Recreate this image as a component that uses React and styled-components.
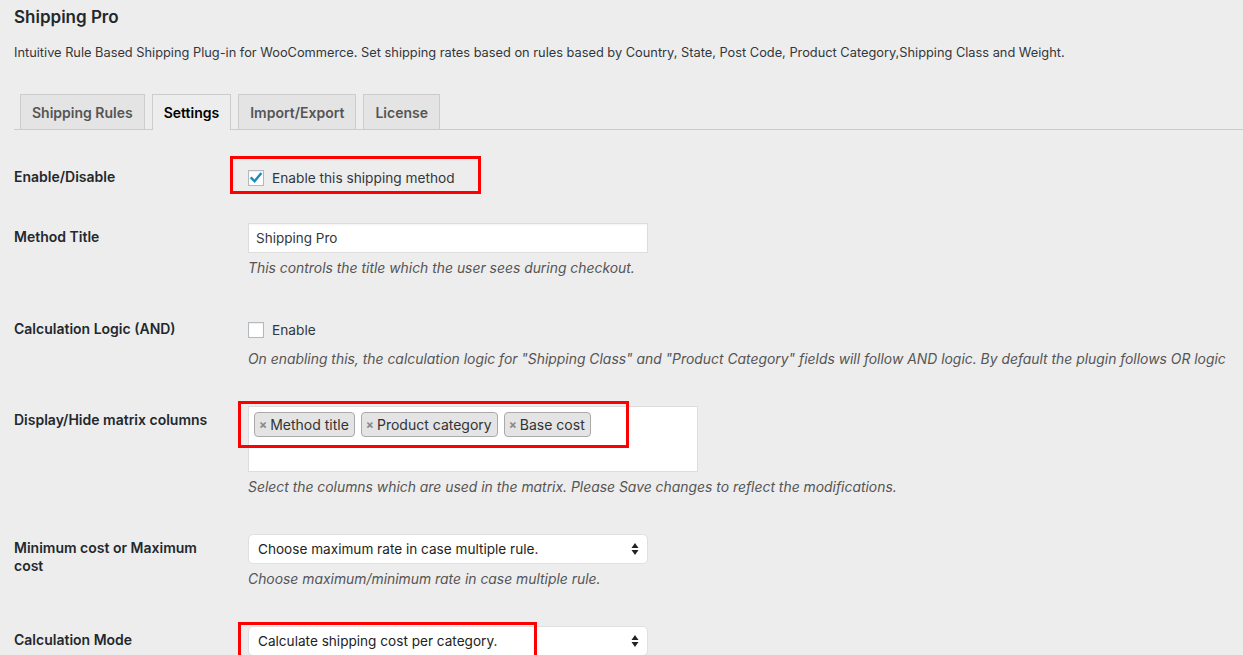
import React from "react";
import styled, { createGlobalStyle } from "styled-components";

const GlobalStyle = createGlobalStyle`
  html, body {
    margin: 0;
    padding: 0;
    background: #ededed;
  }
  body {
    font-family: Inter, "Noto Sans", "Liberation Sans", sans-serif;
    color: #23282d;
    overflow: hidden;
  }
`;

const Page = styled.div`
  padding: 0 0 0 14px;
  width: 1229px;
  height: 655px;
  overflow: hidden;
`;

const Title = styled.h2`
  margin: 0;
  padding-top: 7px;
  font-size: 17px;
  line-height: 20px;
  font-weight: 600;
  color: #23282d;
`;

const Intro = styled.p`
  margin: 16px 0 0;
  font-size: 12.8px;
  line-height: 20px;
  color: #32373c;
  white-space: nowrap;
`;

const TabBar = styled.nav`
  display: flex;
  align-items: flex-end;
  margin-top: 31px;
  padding-left: 6px;
  border-bottom: 1px solid #ccc;
  height: 35px;
`;

const Tab = styled.a`
  box-sizing: border-box;
  height: ${(p) => (p.active ? "36px" : "35px")};
  margin-right: 7px;
  margin-bottom: ${(p) => (p.active ? "-1px" : "0")};
  padding: 0 11px;
  display: flex;
  align-items: center;
  border: 1px solid #ccc;
  border-bottom: none;
  background: ${(p) => (p.active ? "#ededed" : "#e4e4e4")};
  color: ${(p) => (p.active ? "#000" : "#555")};
  font-size: 14px;
  font-weight: 600;
  text-decoration: none;
  white-space: nowrap;
`;

const Form = styled.div`
  margin-top: 18px;
`;

const Row = styled.div`
  display: grid;
  grid-template-columns: 220px 1fr;
  align-items: start;
`;

const Label = styled.div`
  padding: 20px 10px 20px 0;
  font-size: 14px;
  line-height: 18px;
  font-weight: 600;
  color: #23282d;
`;

const Field = styled.div`
  padding: 15px 10px 15px 14px;
`;

const Control = styled.div`
  position: relative;
  width: max-content;
`;

const CheckLine = styled.label`
  display: flex;
  align-items: center;
  gap: 8px;
  height: ${(p) => p.h || 30}px;
  font-size: 13.7px;
  color: #32373c;
`;

const Box = styled.span`
  box-sizing: border-box;
  width: 16px;
  height: 16px;
  border: 1px solid #b4b9be;
  background: #fff;
  box-shadow: inset 0 1px 2px rgba(0, 0, 0, 0.07);
  display: flex;
  align-items: center;
  justify-content: center;
`;

const TextInput = styled.div`
  box-sizing: border-box;
  width: 400px;
  height: 30px;
  padding: 0 7px;
  display: flex;
  align-items: center;
  background: #fff;
  border: 1px solid #ddd;
  box-shadow: inset 0 1px 2px rgba(0, 0, 0, 0.05);
  font-size: 13.5px;
  color: #32373c;
`;

const Description = styled.p`
  margin: 6px 0 8px;
  font-size: 13.9px;
  line-height: 18px;
  font-style: italic;
  color: #555;
  white-space: nowrap;
`;

const MultiSelect = styled.div`
  box-sizing: border-box;
  width: 450px;
  height: 66px;
  padding: 5px 5px;
  display: flex;
  align-items: flex-start;
  gap: 6px;
  background: #fff;
  border: 1px solid #ddd;
`;

const Tag = styled.span`
  box-sizing: border-box;
  height: 25px;
  padding: 0 5px 0 4px;
  display: flex;
  align-items: center;
  gap: 2px;
  background: #e4e4e4;
  border: 1px solid #aaa;
  border-radius: 4px;
  font-size: 14px;
  color: #333;
  white-space: nowrap;
`;

const TagX = styled.span`
  color: #888;
  font-weight: 700;
  font-size: 12px;
  margin-right: 1px;
`;

const Select = styled.div`
  box-sizing: border-box;
  width: 400px;
  height: 30px;
  padding: 0 8px 0 9px;
  display: flex;
  align-items: center;
  justify-content: space-between;
  background: #fff;
  border: 1px solid #e0e0e0;
  border-radius: 5px;
  font-size: 13.6px;
  color: #222;
`;

const Highlight = styled.div`
  position: absolute;
  left: ${(p) => p.x}px;
  top: ${(p) => p.y}px;
  width: ${(p) => p.w}px;
  height: ${(p) => p.h}px;
  box-sizing: border-box;
  border: 3px solid #ff0000;
  pointer-events: none;
`;

const Check = () => (
  <svg width="14" height="14" viewBox="0 0 14 14">
    <path d="M2.5 7.2 L5.6 10.2 L11.6 3" fill="none" stroke="#1e8cbe" strokeWidth="2.4" strokeLinecap="square" />
  </svg>
);

const Arrows = () => (
  <svg width="8" height="14" viewBox="0 0 8 14">
    <path d="M4 1 L7.5 6 L0.5 6 Z" fill="#222" />
    <path d="M4 13 L7.5 8 L0.5 8 Z" fill="#222" />
  </svg>
);

const tags = ["Method title", "Product category", "Base cost"];

export default function App() {
  return (
    <Page>
      <GlobalStyle />
      <Title>Shipping Pro</Title>
      <Intro>
        Intuitive Rule Based Shipping Plug-in for WooCommerce. Set shipping rates based on rules based by Country, State, Post
        Code, Product Category,Shipping Class and Weight.
      </Intro>
      <TabBar>
        <Tab>Shipping Rules</Tab>
        <Tab active>Settings</Tab>
        <Tab>Import/Export</Tab>
        <Tab>License</Tab>
      </TabBar>

      <Form>
        <Row>
          <Label>Enable/Disable</Label>
          <Field>
            <Control>
              <CheckLine>
                <Box>
                  <Check />
                </Box>
                Enable this shipping method
              </CheckLine>
              <Highlight x={-18} y={-7} w={251} h={38} />
            </Control>
          </Field>
        </Row>

        <Row>
          <Label>Method Title</Label>
          <Field>
            <TextInput>Shipping Pro</TextInput>
            <Description>This controls the title which the user sees during checkout.</Description>
          </Field>
        </Row>

        <Row>
          <Label>Calculation Logic (AND)</Label>
          <Field>
            <CheckLine h={29}>
              <Box />
              Enable
            </CheckLine>
            <Description>
              On enabling this, the calculation logic for "Shipping Class" and "Product Category" fields will follow AND logic.
              By default the plugin follows OR logic
            </Description>
          </Field>
        </Row>

        <Row>
          <Label>Display/Hide matrix columns</Label>
          <Field>
            <Control>
              <MultiSelect>
                {tags.map((t) => (
                  <Tag key={t}>
                    <TagX>×</TagX>
                    {t}
                  </Tag>
                ))}
              </MultiSelect>
              <Highlight x={-10} y={-5} w={391} h={47} />
            </Control>
            <Description>Select the columns which are used in the matrix. Please Save changes to reflect the modifications.</Description>
          </Field>
        </Row>

        <Row>
          <Label>Minimum cost or Maximum cost</Label>
          <Field>
            <Select>
              Choose maximum rate in case multiple rule.
              <Arrows />
            </Select>
            <Description>Choose maximum/minimum rate in case multiple rule.</Description>
          </Field>
        </Row>

        <Row>
          <Label>Calculation Mode</Label>
          <Field>
            <Control>
              <Select>
                Calculate shipping cost per category.
                <Arrows />
              </Select>
              <Highlight x={-10} y={-4} w={299} h={37} />
            </Control>
          </Field>
        </Row>
      </Form>
    </Page>
  );
}
